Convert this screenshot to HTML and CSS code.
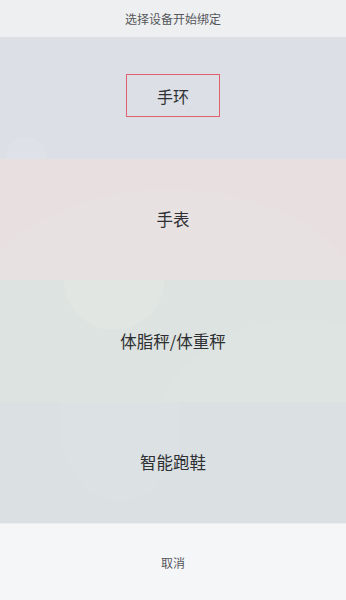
FILE: index.html
```html
<!DOCTYPE html>
<html lang="zh">
<head>
<meta charset="utf-8">
<link rel="stylesheet" href="styles.css">
</head>
<body>
<div class="sheet">
  <div class="title">选择设备开始绑定</div>
  <div class="options">
    <div class="opt opt-band">
      <span class="deco d1"></span>
      <span class="label focused">手环</span>
    </div>
    <div class="opt opt-watch">
      <span class="deco d2"></span>
      <span class="label">手表</span>
    </div>
    <div class="opt opt-scale">
      <span class="deco d3"></span>
      <span class="deco d4"></span>
      <span class="label">体脂秤/体重秤</span>
    </div>
    <div class="opt opt-shoe">
      <span class="deco d5"></span>
      <span class="label">智能跑鞋</span>
    </div>
  </div>
  <div class="cancel">取消</div>
</div>
</body>
</html>
```
FILE: styles.css
```css
* { box-sizing: border-box; }
html, body { margin: 0; padding: 0; }
body {
  width: 346px;
  height: 600px;
  font-family: "Noto Sans CJK SC", "Noto Sans", sans-serif;
  background: #f5f6f8;
  overflow: hidden;
}
.sheet {
  display: flex;
  flex-direction: column;
  height: 600px;
}
.title {
  height: 37px;
  display: flex;
  align-items: center;
  justify-content: center;
  font-size: 12px;
  color: #55575b;
  background: #eeeff1;
}
.options {
  display: flex;
  flex-direction: column;
}
.opt {
  position: relative;
  overflow: hidden;
  height: 121.5px;
  display: flex;
  align-items: center;
  justify-content: center;
}
.opt-band { background: #dce0e6; }
.opt-watch { background: #e7dfe0; }
.opt-scale { background: #dde3e0; }
.opt-shoe { background: #dbe0e3; }
.label {
  position: relative;
  font-size: 16.5px;
  color: #2e3033;
  line-height: 1;
}
.focused {
  width: 94px;
  height: 43px;
  margin-bottom: 4px;
  font-size: 16px;
  border: 1px solid #e06070;
  display: flex;
  align-items: center;
  justify-content: center;
}
.deco {
  position: absolute;
  border-radius: 50%;
  background: rgba(255, 255, 255, 0.08);
}
.d1 { width: 40px; height: 40px; left: 6px; top: 100px; }
.d2 { width: 420px; height: 300px; left: -40px; top: 30px; background: rgba(255,255,255,0.08); }
.d3 { width: 100px; height: 100px; left: 64px; top: -50px; background: rgba(255,255,255,0.12); }
.d4 { width: 300px; height: 260px; left: 150px; top: 40px; background: rgba(255,255,255,0.05); }
.d5 { width: 120px; height: 160px; left: 60px; top: -60px; background: rgba(255,255,255,0.05); }
.cancel {
  flex: 1;
  display: flex;
  align-items: center;
  justify-content: center;
  font-size: 12px;
  color: #55575b;
  background: #f5f6f8;
  border-top: 1px solid #ecedf0;
}
```
